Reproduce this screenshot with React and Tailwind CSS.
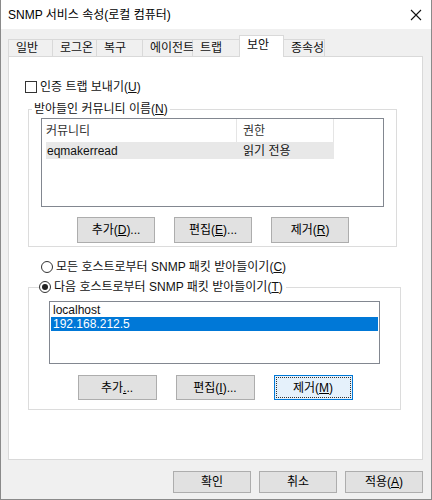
const FONT = { fontFamily: '"Liberation Sans", "Noto Sans CJK KR", sans-serif' };

const TABS = ["일반", "로그온", "복구", "에이전트", "트랩", "보안", "종속성"];
const TAB_W = [45, 44, 46, 50, 46, 45, 41];

function Btn({ children, focused, className = "" }) {
  return (
    <button
      type="button"
      className={`flex items-center justify-center whitespace-nowrap border text-[12px] text-black ${
        focused ? "border-[#0078d7] bg-[#e5f1fb]" : "border-[#adadad] bg-[#e1e1e1]"
      } ${className}`}
    >
      {focused ? (
        <span className="flex h-full w-full items-center justify-center outline outline-1 outline-dotted outline-[#333] -outline-offset-[2px]">
          {children}
        </span>
      ) : (
        children
      )}
    </button>
  );
}

function Radio({ checked, children }) {
  return (
    <div className="flex items-center gap-[3px] whitespace-nowrap bg-white text-[12px] text-[#111]">
      <span className="flex h-[12px] w-[12px] items-center justify-center rounded-full border border-[#333] bg-white">
        {checked && <span className="h-[6px] w-[6px] rounded-full bg-[#222]" />}
      </span>
      <span>{children}</span>
    </div>
  );
}

export default function App() {
  return (
    <div
      className="flex h-[500px] w-[432px] flex-col border-x border-b border-[#8a8a8a] bg-[#f0f0f0]"
      style={FONT}
    >
      {/* title bar */}
      <div className="flex h-[29px] items-center justify-between bg-white pl-[7px] pr-[9px]">
        <span className="text-[12px] text-black">SNMP 서비스 속성(로컬 컴퓨터)</span>
        <svg width="12" height="12" viewBox="0 0 12 12">
          <path d="M1 1 L11 11 M11 1 L1 11" stroke="#111" strokeWidth="1.1" fill="none" />
        </svg>
      </div>

      {/* tabs */}
      <div className="mt-[6px] flex h-[21px] items-end pl-[7px]">
        {TABS.map((t, i) => {
          const sel = t === "보안";
          return (
            <div
              key={t}
              style={{ width: TAB_W[i] }}
              className={`flex items-center whitespace-nowrap border-[#d9d9d9] pl-[7px] text-[12px] text-[#111] ${
                sel
                  ? "relative z-10 -mb-px h-[22px] border-x border-t bg-white pb-[4px]"
                  : `h-[17px] border-t bg-[#f0f0f0] ${i === 0 ? "border-l" : ""} ${
                      TABS[i + 1] === "보안" ? "" : "border-r"
                    }`
              }`}
            >
              {t}
            </div>
          );
        })}
      </div>

      {/* panel */}
      <div className="mx-[7px] flex h-[404px] w-[415px] flex-col border border-[#d9d9d9] bg-white pl-[19px]">
        <div className="-ml-[3px] mt-[21px] flex items-center gap-[3px] text-[12px] text-[#111]">
          <span className="h-[12px] w-[12px] border border-[#333] bg-white" />
          <span>
            인증 트랩 보내기(<u>U</u>)
          </span>
        </div>

        {/* group 1 */}
        <fieldset className="mt-[5px] w-[368px] border border-[#dcdcdc] px-[12px] pb-[3px]">
          <legend className="-ml-[9px] px-[2px] text-[12px] leading-[16px] text-[#111]">
            받아들인 커뮤니티 이름(<u>N</u>)
          </legend>
          <div className="mt-[1px] h-[89px] w-[343px] border border-[#828790] bg-white">
            <div className="flex h-[23px] items-center text-[12px] text-[#333]">
              <div className="flex h-full w-[195px] items-center border-r border-[#e5e5e5] pl-[4px]">
                커뮤니티
              </div>
              <div className="flex h-full w-[97px] items-center border-r border-[#e5e5e5] pl-[6px]">
                권한
              </div>
            </div>
            <div className="ml-[4px] flex h-[17px] w-[288px] items-center bg-[#e8e8e8] text-[12px] text-[#111]">
              <div className="w-[192px] pl-[1px]">eqmakerread</div>
              <div className="pl-[5px]">읽기 전용</div>
            </div>
          </div>
          <div className="mt-[10px] flex justify-center gap-[19px] pl-[1px]">
            <Btn className="h-[26px] w-[78px]">
              추가(<u>D</u>)...
            </Btn>
            <Btn className="h-[26px] w-[78px]">
              편집(<u>E</u>)...
            </Btn>
            <Btn className="h-[26px] w-[78px]">
              제거(<u>R</u>)
            </Btn>
          </div>
        </fieldset>

        <div className="mt-[11px] pl-[13px]">
          <Radio>
            모든 호스트로부터 SNMP 패킷 받아들이기(<u>C</u>)
          </Radio>
        </div>

        {/* group 2 */}
        <fieldset className="mt-[2px] w-[368px] border border-[#dcdcdc] px-[20px] pb-[9px]">
          <legend className="-ml-[10px] pr-[3px]">
            <Radio checked>
              다음 호스트로부터 SNMP 패킷 받아들이기(<u>T</u>)
            </Radio>
          </legend>
          <div className="mt-[5px] h-[63px] w-[331px] border border-[#828790] bg-white p-px text-[12px] leading-[14px]">
            <div className="pl-[2px] text-[#111]">localhost</div>
            <div className="bg-[#0078d7] pl-[2px] text-white">192.168.212.5</div>
          </div>
          <div className="mt-[11px] flex justify-center gap-[19px] pl-[1px]">
            <Btn className="h-[25px] w-[79px]">
              추가<u>.</u>..
            </Btn>
            <Btn className="h-[25px] w-[79px]">
              편집(<u>I</u>)...
            </Btn>
            <Btn focused className="h-[25px] w-[79px]">
              제거(<u>M</u>)
            </Btn>
          </div>
        </fieldset>
      </div>

      {/* bottom buttons */}
      <div className="mt-[11px] flex justify-end gap-[8px] pr-[8px]">
        <Btn className="h-[22px] w-[78px]">확인</Btn>
        <Btn className="h-[22px] w-[78px]">취소</Btn>
        <Btn className="h-[22px] w-[78px]">
          적용(<u>A</u>)
        </Btn>
      </div>
    </div>
  );
}
